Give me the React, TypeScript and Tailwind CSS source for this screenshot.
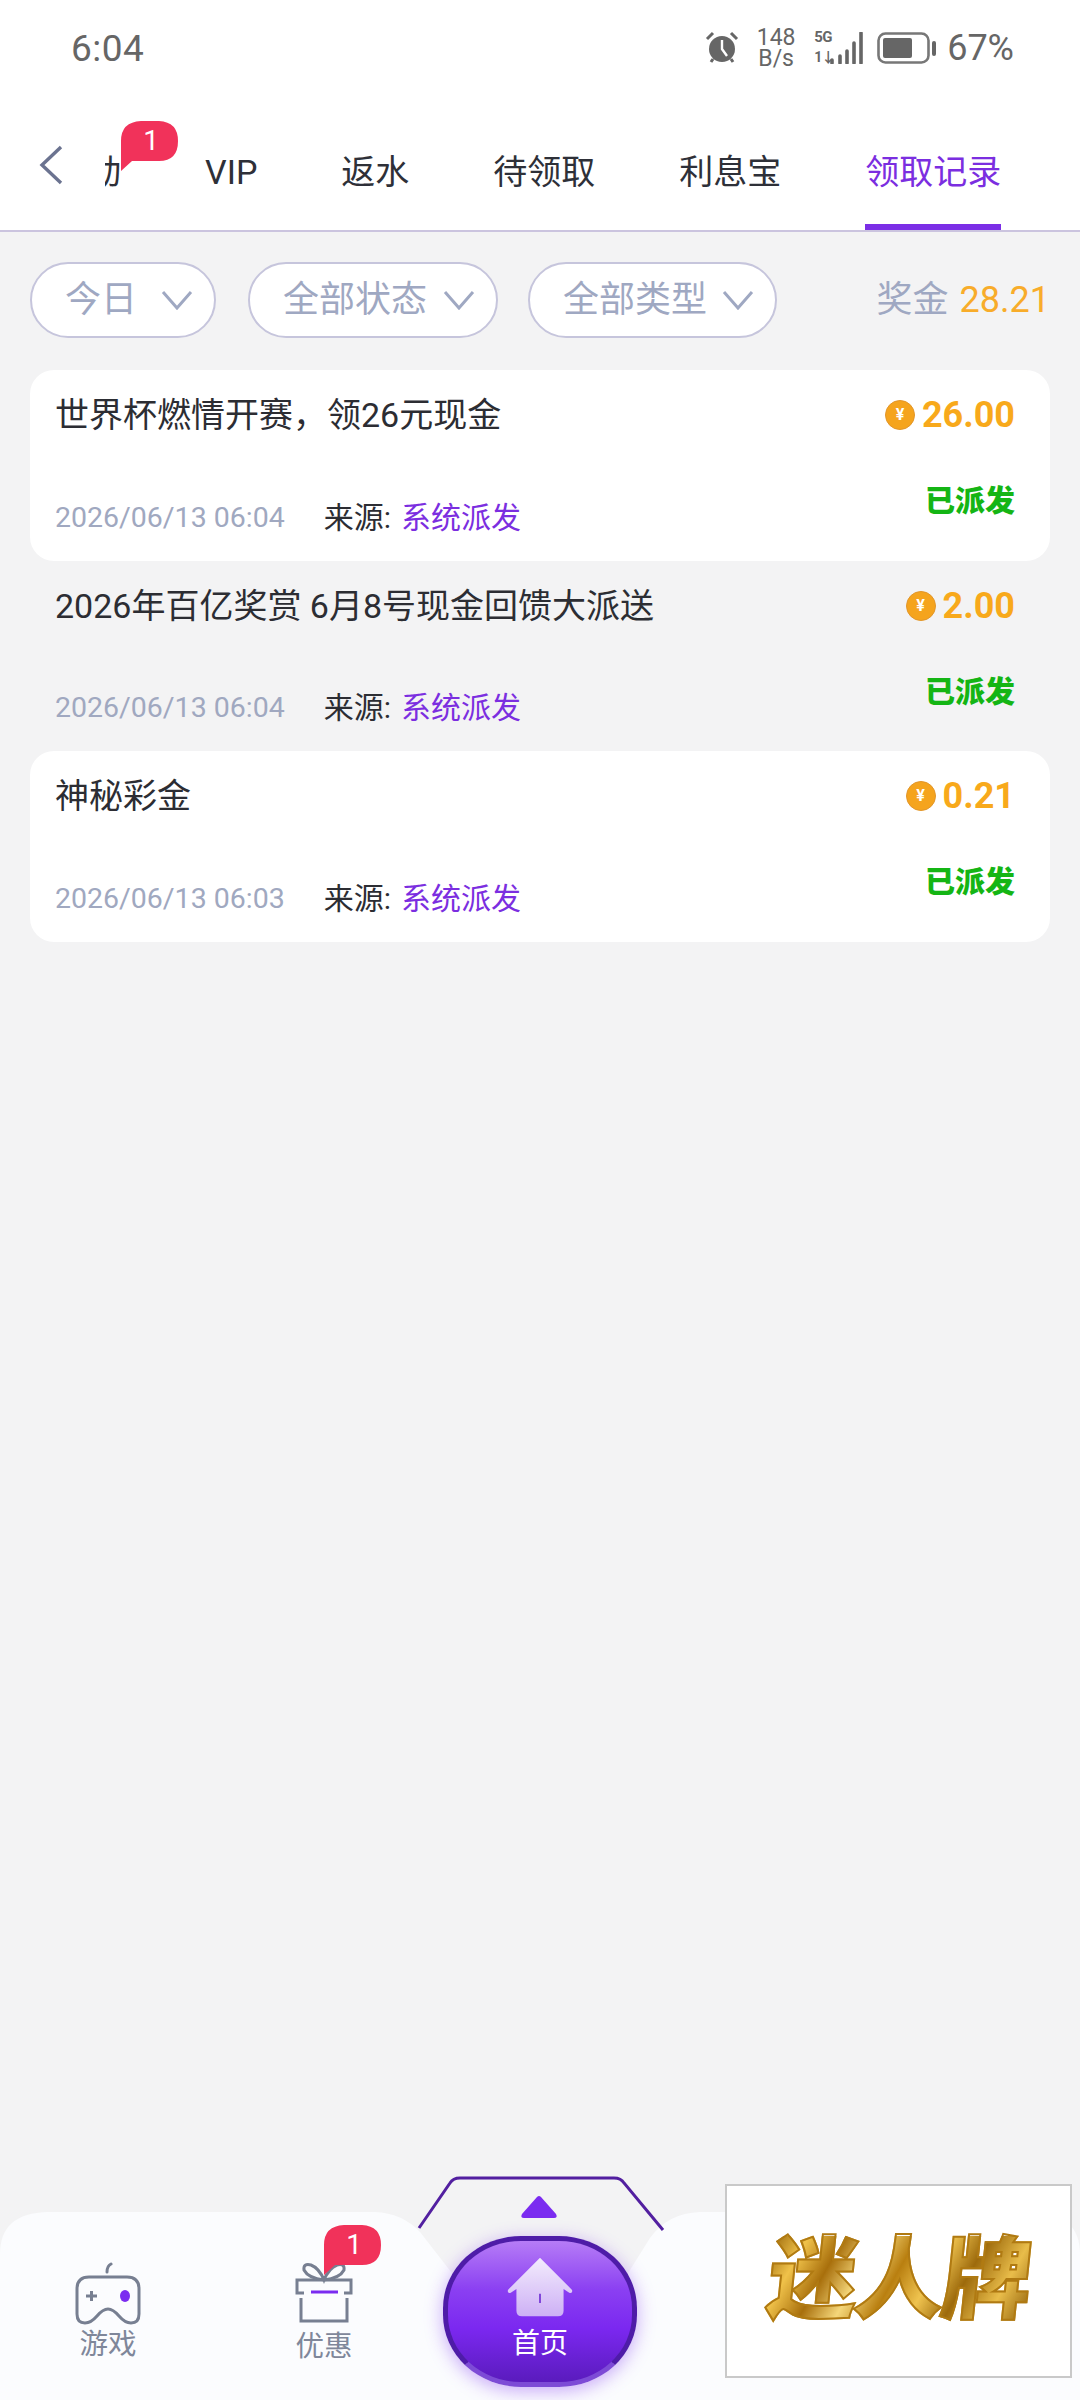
import React from 'react';

const FONT = "font-['Roboto','Noto_Sans_CJK_SC',sans-serif]";

const records = [
    { title: '世界杯燃情开赛，领26元现金', amount: '26.00', time: '2026/06/13 06:04', white: true },
    { title: '2026年百亿奖赏 6月8号现金回馈大派送', amount: '2.00', time: '2026/06/13 06:04', white: false },
    { title: '神秘彩金', amount: '0.21', time: '2026/06/13 06:03', white: true },
];

const Badge: React.FC = () => (
    <div className="relative w-[58px] h-[50px]">
        <svg viewBox="0 0 58 50" className="absolute inset-0 w-[58px] h-[50px]">
            <path d="M0 50 L0 20 Q0 1 20 0 H38 Q57 1 57 20 Q57 40 38 40 H11 Z" fill="#f1325a" />
        </svg>
        <span className="absolute left-[21px] top-[1px] w-[18px] text-center text-[28px] leading-[38px] text-white">1</span>
    </div>
);

const StatusBar: React.FC = () => (
    <div className="h-[96px] flex items-center justify-between pl-[71px] pr-[66px] text-[#666666]">
        <span className="text-[37px] leading-none tracking-[0.5px]">6:04</span>
        <div className="flex items-center">
            <svg viewBox="0 0 34 34" className="w-[34px] h-[34px]">
                <circle cx="17" cy="18" r="13" fill="#666666" />
                <path d="M17 9 V18 L22 25" fill="none" stroke="#ffffff" strokeWidth="2.4" />
                <path d="M2 8 L8 2 M32 8 L26 2 M6 31 L8 28 M28 31 L26 28" stroke="#666666" strokeWidth="3" />
            </svg>
            <div className="ml-[17px] w-[40px] flex flex-col items-center text-[23px] leading-[21px] font-normal">
                <span>148</span>
                <span>B/s</span>
            </div>
            <div className="ml-[18px] relative w-[50px] h-[32px]">
                <span className="absolute left-0 -top-[3px] text-[15px] leading-[16px] font-bold tracking-[-0.5px]">5G</span>
                <span className="absolute left-0 top-[18px] text-[14px] leading-[14px] font-bold tracking-[-1px]">1↓</span>
                <svg viewBox="0 0 50 32" className="absolute inset-0 w-[50px] h-[32px]">
                    <path d="M18 28 V31 M26 24 V31 M33 19 V31 M40 11 V31 M47 1 V31" stroke="#666666" strokeWidth="3.6" strokeLinecap="round" />
                </svg>
            </div>
            <svg viewBox="0 0 60 32" className="ml-[13px] w-[60px] h-[32px]">
                <rect x="1.5" y="1.5" width="50" height="29" rx="7" fill="none" stroke="#777777" strokeWidth="2.6" />
                <rect x="6" y="6" width="29" height="20" rx="2" fill="#666666" />
                <rect x="55" y="9" width="4" height="15" rx="2" fill="#666666" />
            </svg>
            <span className="ml-[10px] text-[36px] leading-none">67%</span>
        </div>
    </div>
);

const TabBar: React.FC = () => {
    const tabs = ['VIP', '返水', '待领取', '利息宝'];
    return (
        <div className="relative h-[136px] border-b-2 border-[#cbc4df]">
            <svg viewBox="0 0 26 40" className="absolute left-[38px] top-[49px] w-[26px] h-[40px]">
                <path d="M23 2 L4 20 L23 38" fill="none" stroke="#6b7390" strokeWidth="3.4" />
            </svg>
            <div className="ml-[105px] h-full overflow-hidden">
                <div className="-ml-[52px] flex gap-[84px] h-full text-[34px] leading-[40px] text-[#2e3038]">
                    <div className="relative pt-[56px] shrink-0">
                        <span>活动</span>
                        <div className="absolute left-[68px] top-[25px]"><Badge /></div>
                    </div>
                    {tabs.map(tab => (
                        <div key={tab} className="pt-[56px] shrink-0">{tab}</div>
                    ))}
                    <div className="relative pt-[56px] shrink-0 text-[#7b2ee0]">
                        领取记录
                        <div className="absolute left-0 right-0 bottom-0 h-[6px] bg-[#7b2ee6]" />
                    </div>
                </div>
            </div>
        </div>
    );
};

const FilterChip: React.FC<{ label: string; width: string }> = ({ label, width }) => (
    <div className={`${width} h-[76px] flex items-center justify-between pl-[33px] pr-[21px] rounded-[38px] bg-white border-2 border-[#c6c5dc] text-[36px] text-[#9fa8c2]`}>
        <span>{label}</span>
        <svg viewBox="0 0 32 20" className="w-[32px] h-[20px]">
            <path d="M2 2 L16 18 L30 2" fill="none" stroke="#9fa8c2" strokeWidth="3" />
        </svg>
    </div>
);

const RecordRow: React.FC<{ title: string; amount: string; time: string; white: boolean }> = ({ title, amount, time, white }) => (
    <div className={`h-[190.5px] flex justify-between pl-[25px] pr-[35px] rounded-[24px] ${white ? 'bg-white' : ''}`}>
        <div className="flex flex-col justify-between pt-[24px] pb-[24px]">
            <div className="text-[34px] leading-[42px] text-[#2c2d33]">{title}</div>
            <div className="flex items-center text-[30px] leading-[38px]">
                <span className="text-[28.5px] text-[#a0a8c0]">{time}</span>
                <span className="ml-[39px] text-[#2c2d33]">来源:</span>
                <span className="ml-[10px] text-[#7b2ee0]">系统派发</span>
            </div>
        </div>
        <div className="flex flex-col items-end pt-[27px]">
            <div className="flex items-center h-[36px]">
                <div className="w-[30px] h-[30px] rounded-full bg-[#f5a41d] border border-[#e2962a] flex items-center justify-center text-[16px] font-bold leading-none text-white">¥</div>
                <span className="ml-[7px] text-[36px] leading-none font-bold text-[#f8a91b]">{amount}</span>
            </div>
            <div className="mt-[49px] text-[30px] leading-[38px] font-black text-[#14b514]">已派发</div>
        </div>
    </div>
);

const BottomNav: React.FC = () => (
    <div className="absolute left-0 bottom-0 w-[1080px] h-[224px]">
        <svg viewBox="0 0 1080 224" className="absolute inset-0 w-[1080px] h-[224px]">
            <path d="M0 224 V78 Q0 37 48 36 H375 Q402 37 420 56 L462 110 L620 110 L650 62 Q668 37 700 36 H1032 Q1080 37 1080 78 V224 Z" fill="#fbfcfe" />
            <path d="M419 52 L450 7 Q453 2 460 2 H614 Q621 2 624 7 L663 54" fill="none" stroke="#521fa0" strokeWidth="3" />
            <path d="M537 21 Q539 19 541 21 L556 38 Q558 42 554 42 H524 Q520 42 522 38 Z" fill="#7b2cf0" />
        </svg>
        <div className="relative grid grid-cols-5 h-full text-[28.5px] leading-[34px] text-[#7f879a]">
            <div className="flex flex-col items-center pt-[86px]">
                <svg viewBox="0 0 66 64" className="w-[66px] h-[64px]">
                    <path d="M14 15 H52 Q64 15 64 27 V52 Q64 61 56 61 Q50 61 44 54 Q38 47 33 47 Q28 47 22 54 Q16 61 10 61 Q2 61 2 52 V27 Q2 15 14 15 Z" fill="none" stroke="#777f91" strokeWidth="3" />
                    <path d="M32 10 Q32 4 36 2" fill="none" stroke="#777f91" strokeWidth="3" strokeLinecap="round" />
                    <path d="M11 34 H22 M16.5 29 V39" stroke="#777f91" strokeWidth="3" />
                    <ellipse cx="50" cy="34" rx="5" ry="6" fill="#7b2cf0" />
                </svg>
                <span className="mt-[2px]">游戏</span>
            </div>
            <div className="relative flex flex-col items-center pt-[86px]">
                <svg viewBox="0 0 60 62" className="w-[60px] h-[62px] mb-[4px]">
                    <path d="M10 31 H3 V18 H57 V31 H50 M7 36 V59 H53 V36" fill="none" stroke="#777f91" strokeWidth="3" />
                    <path d="M30 18 Q14 16 10 8 Q9 1 17 3 Q25 6 30 18 Q35 6 43 3 Q51 1 50 8 Q46 16 30 18 Z" fill="none" stroke="#777f91" strokeWidth="3" />
                    <path d="M17 30 H44" stroke="#7b2cf0" strokeWidth="3" />
                </svg>
                <span className="mt-[2px]">优惠</span>
                <div className="absolute left-[108px] top-[49px]"><Badge /></div>
            </div>
            <div className="relative flex justify-center">
                <div className="absolute top-[60px] w-[194px] h-[151px] rounded-[78px/72px] border-[5px] border-[#4e1ca8] border-b-[#7d4bd6] bg-[linear-gradient(180deg,#b67cf6_0%,#8a3ff2_35%,#7b28f0_62%,#5a1bbd_100%)] shadow-[0_4px_18px_rgba(123,44,240,0.4)] flex flex-col items-center pt-[15px]">
                    <svg viewBox="0 0 70 64" className="w-[66px] h-[64px]">
                        <defs>
                            <linearGradient id="house" x1="0" y1="0" x2="0" y2="1">
                                <stop offset="0" stopColor="#f3ecfd" />
                                <stop offset="1" stopColor="#cdb0f5" />
                            </linearGradient>
                        </defs>
                        <path d="M35 0 L69 34 Q70 38 66 37 L60 33 V56 Q60 62 54 62 H16 Q10 62 10 56 V33 L4 37 Q0 38 1 34 Z" fill="url(#house)" />
                        <path d="M35 38 V48" stroke="#7b3fd8" strokeWidth="2" />
                    </svg>
                    <span className="mt-[7px] text-[28px] leading-[34px] text-white">首页</span>
                </div>
            </div>
        </div>
        {/* floating ad box covers the last two tabs */}
        <div className="absolute left-[725px] top-[8px] w-[347px] h-[194px] bg-white border-2 border-[#c9c9c9] flex items-center justify-center">
            <span className="-skew-x-6 text-[90px] leading-none font-black tracking-[-3px] [-webkit-text-stroke:2px_#b07a12] bg-[linear-gradient(115deg,#9d6a0c_0%,#f0c24a_12%,#a86f0c_24%,#f5d77a_36%,#b97f10_48%,#efc34f_60%,#9d6a0c_72%,#e9bd4a_86%,#8f5f0a_100%)] bg-clip-text text-transparent">迷人牌</span>
        </div>
    </div>
);

const App: React.FC = () => (
    <div className={`${FONT} relative w-[1080px] h-[2400px] overflow-hidden bg-[#f3f3f4]`}>
        <div className="bg-white">
            <StatusBar />
            <TabBar />
        </div>
        <div className="flex items-center pl-[30px] pr-[30px] pt-[30px]">
            <FilterChip label="今日" width="w-[186px]" />
            <div className="ml-[32px]"><FilterChip label="全部状态" width="w-[250px]" /></div>
            <div className="ml-[30px]"><FilterChip label="全部类型" width="w-[249px]" /></div>
            <div className="ml-auto text-[36px] leading-[40px] text-[#9fa8c2]">
                奖金<span className="ml-[11px] text-[#f8ac2a]">28.21</span>
            </div>
        </div>
        <div className="mt-[32px] px-[30px]">
            {records.map(item => (
                <RecordRow key={item.title} {...item} />
            ))}
        </div>
        <BottomNav />
    </div>
);

export default App;
